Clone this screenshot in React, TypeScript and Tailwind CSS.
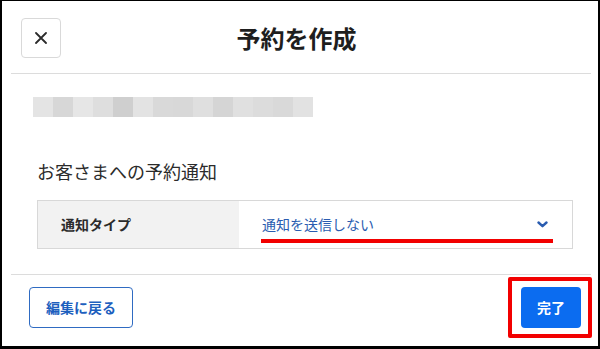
import React from 'react';

// shades of the mosaic blur that hides the customer name
const blurShades = [
  '#e4e4e4', '#d7d7d7', '#e6e6e6', '#dedede', '#cfcfcf', '#e3e3e3', '#d9d9d9',
  '#d8d8d8', '#dfdfdf', '#d5d5d5', '#e0e0e0', '#dcdcdc', '#d9d9d9', '#e2e2e2',
];

function CloseIcon() {
  return (
    <svg width="12" height="12" viewBox="0 0 12 12" fill="none">
      <path d="M1 1L11 11M11 1L1 11" stroke="#2b2b2b" strokeWidth="1.8" strokeLinecap="round" />
    </svg>
  );
}

function ChevronDown() {
  return (
    <svg width="11" height="7" viewBox="0 0 11 7" fill="none">
      <path d="M1.5 1.5L5.5 5.2L9.5 1.5" stroke="#2a5cb0" strokeWidth="2.4" strokeLinecap="round" strokeLinejoin="round" />
    </svg>
  );
}

function App() {
  return (
    <div
      className="w-[600px] h-[349px] bg-white border-t border-x-2 border-b-[3px] border-black flex flex-col"
      style={{ fontFamily: '"Noto Sans CJK JP", "Noto Sans", sans-serif' }}
    >
      {/* Header */}
      <header className="grid grid-cols-[40px_1fr_40px] items-center pl-[19px] pr-[26px] pt-[17px] pb-[15px]">
        <button className="w-10 h-10 flex items-center justify-center border border-[#d9d9d9] rounded-[4px] bg-white">
          <CloseIcon />
        </button>
        <h1 className="text-center text-[24px] leading-[32px] font-bold text-[#1e1e1e]">予約を作成</h1>
        <div />
      </header>
      <div className="h-px bg-[#dcdcdc] ml-[9px] mr-[7px]" />

      {/* Body */}
      <main className="pl-[35px] pr-[25px] pt-[23px] pb-[25px]">
        <div className="flex w-[280px] h-5 -ml-1">
          {blurShades.map((c, i) => (
            <div key={i} className="flex-1" style={{ backgroundColor: c }} />
          ))}
        </div>

        <h2 className="mt-[41px] text-[18px] leading-[26px] text-[#2b2b2b]">お客さまへの予約通知</h2>

        <div className="mt-4 flex h-[49px] border border-[#d8d8d8]">
          <div className="w-[201px] bg-[#f2f2f2] flex items-center pl-[23px] text-[14px] font-bold text-[#2b2b2b]">
            通知タイプ
          </div>
          <div className="relative flex-1 flex items-center justify-between pl-[23px] pr-[24px]">
            <span className="text-[14px] text-[#2a5cb0]">通知を送信しない</span>
            <ChevronDown />
            <div className="absolute left-[22px] top-[38px] w-[292px] h-1 bg-[#f20000]" />
          </div>
        </div>
      </main>
      <div className="h-px bg-[#dcdcdc] ml-[9px] mr-[7px]" />

      {/* Footer */}
      <footer className="flex items-center justify-between pl-[27px] pr-[17px] pt-3 pb-[18px]">
        <button className="w-[104px] h-[41px] border border-[#2f6bc2] rounded-[4px] text-[14px] font-bold text-[#1d5fbe] bg-white">
          編集に戻る
        </button>
        <div className="relative">
          <button className="w-[60px] h-[41px] rounded-[4px] bg-[#0b6cf0] text-[14px] font-bold text-white">
            完了
          </button>
          <div className="absolute -left-[13px] -right-[11px] -top-[10px] -bottom-[10px] border-4 border-[#f20000] rounded-[2px]" />
        </div>
      </footer>
    </div>
  );
}

export default App;
